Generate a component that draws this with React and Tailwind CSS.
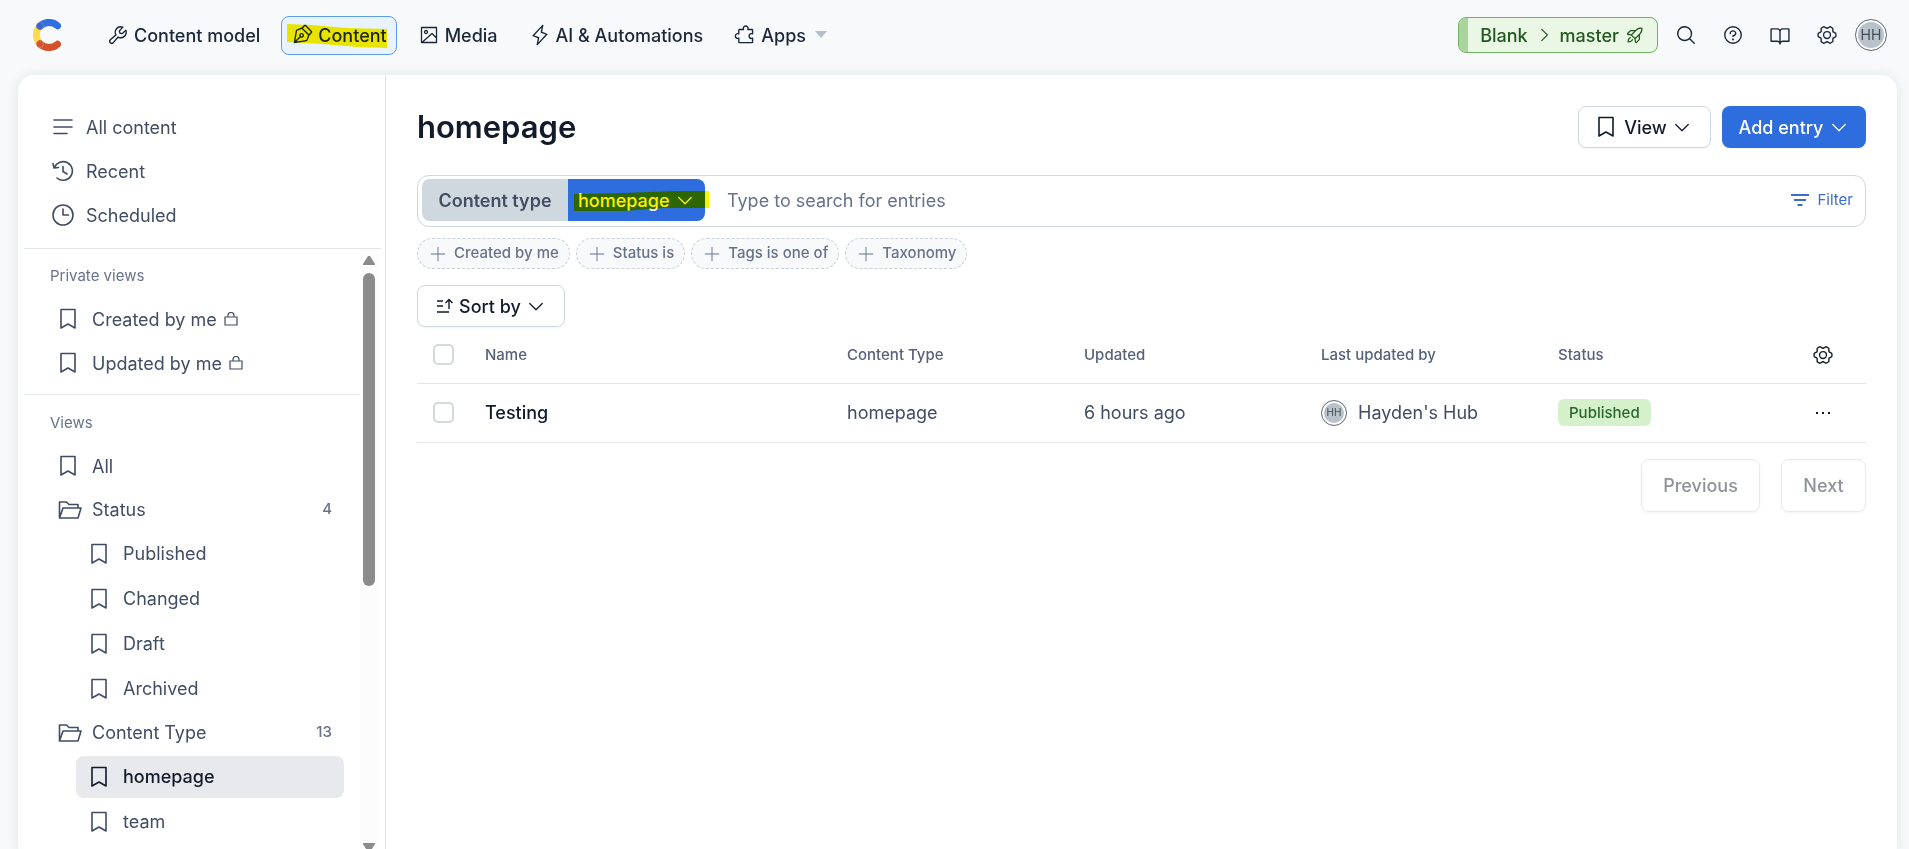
import React from 'react';
import {
  PiWrench,
  PiPenNib,
  PiLightning,
  PiPuzzlePiece,
  PiRocketLaunch,
  PiMagnifyingGlass,
  PiQuestion,
  PiBookOpen,
  PiGearSix,
  PiCaretDown,
  PiCaretRight,
  PiPlusLight,
} from 'react-icons/pi';

const Logo = () => (
  <svg className="h-8 w-7" viewBox="0 0 28 32" fill="none" strokeWidth="7">
    <path d="M7 7.2A12.5 12.5 0 0 0 7 24.800" stroke="#ffda4f" />
    <path d="M7 7.200A12.500 12.500 0 0 1 24.500 6.800" stroke="#2f6fde" strokeLinecap="round" />
    <path d="M7 24.800A12.500 12.500 0 0 0 24.500 25.200" stroke="#d2522b" strokeLinecap="round" />
    <circle cx="7" cy="7" r="3.500" fill="#3b63d0" stroke="#7fa0ea" strokeWidth="0.500" />
    <circle cx="7" cy="25" r="3.500" fill="#d2522b" stroke="#ee9a72" strokeWidth="0.500" />
  </svg>
);

const ImageIcon = ({ className }) => (
  <svg className={className} viewBox="0 0 22 22" fill="none" stroke="currentColor" strokeWidth="1.3" strokeLinejoin="round">
    <path d="M3.5 3.500h15v15h-15zM4.500 18 14 9.500l4.500 4.500" />
    <circle cx="8" cy="8" r="1.500" />
  </svg>
);

const BookmarkIcon = ({ className = '' }) => (
  <svg className={`h-[22px] w-[18px] shrink-0 ${className}`} viewBox="0 0 18 22" fill="none" stroke="currentColor" strokeWidth="1.6" strokeLinejoin="round">
    <path d="M2 1.500h14v18.500l-7-4-7 4z" />
  </svg>
);

const LinesIcon = () => (
  <svg className="h-[22px] w-[22px]" viewBox="0 0 22 22" fill="none" stroke="currentColor" strokeWidth="1.6" strokeLinecap="round">
    <path d="M2 4h18M2 11h18M2 17.500h13" />
  </svg>
);

const HistoryIcon = () => (
  <svg className="h-[22px] w-[22px]" viewBox="0 0 22 22" fill="none" stroke="currentColor" strokeWidth="1.6" strokeLinecap="round" strokeLinejoin="round">
    <path d="M2.500 7.500A9.300 9.300 0 1 1 5 18M1 3.500l1 4.500 4.500-.5M11 6.500v5l4 2.500" />
  </svg>
);

const ClockIcon = () => (
  <svg className="h-[22px] w-[22px]" viewBox="0 0 22 22" fill="none" stroke="currentColor" strokeWidth="1.6" strokeLinecap="round" strokeLinejoin="round">
    <circle cx="11" cy="11" r="10" />
    <path d="M11 5v6h5.500" />
  </svg>
);

const FolderIcon = () => (
  <svg className="h-5 w-6 shrink-0" viewBox="0 0 24 20" fill="none" stroke="currentColor" strokeWidth="1.6" strokeLinejoin="round">
    <path d="M1.500 18V2h7l2.500 2.500h9V8M1.500 18 5 8h18l-3 10z" />
  </svg>
);

const LockIcon = () => (
  <svg className="h-[14px] w-[14px]" viewBox="0 0 14 14" fill="none" stroke="currentColor" strokeWidth="1.2">
    <path d="M1 5h12v8H1zM4 5V3.500a3 3 0 0 1 6 0V5" />
  </svg>
);

const FilterIcon = () => (
  <svg className="h-[14px] w-5" viewBox="0 0 20 14" stroke="currentColor" strokeWidth="2">
    <path d="M1 2h18M4 7h12M7.500 12h5" />
  </svg>
);

const SortIcon = () => (
  <svg className="h-4 w-[18px]" viewBox="0 0 18 16" fill="none" stroke="currentColor" strokeWidth="1.400">
    <path d="M1 3h6M1 8h6M1 14h12M13 11V2M9.500 5 13 1.500 16.500 5" />
  </svg>
);

// Felt-tip stroke laid over a control
const Marker = ({ className, points, viewBox }) => (
  <svg aria-hidden="true" className={`pointer-events-none absolute mix-blend-multiply ${className}`} viewBox={viewBox} preserveAspectRatio="none">
    <polygon points={points} fill="#fff000" />
  </svg>
);

const Avatar = ({ className }) => (
  <span className={`flex shrink-0 items-center justify-center rounded-full border border-[#68737f] bg-[#b9c1c9] text-[#414d5b] ring-2 ring-white ring-inset ${className}`}>
    HH
  </span>
);

const navItems = [
  { label: 'Content model', icon: PiWrench },
  { label: 'Content', icon: PiPenNib, active: true },
  { label: 'Media', icon: ImageIcon },
  { label: 'AI & Automations', icon: PiLightning },
  { label: 'Apps', icon: PiPuzzlePiece, menu: true },
];

const tools = [
  { label: 'Search', icon: PiMagnifyingGlass },
  { label: 'Help', icon: PiQuestion },
  { label: 'Documentation', icon: PiBookOpen },
  { label: 'Settings', icon: PiGearSix },
];

const mainViews = [
  { label: 'All content', icon: LinesIcon },
  { label: 'Recent', icon: HistoryIcon },
  { label: 'Scheduled', icon: ClockIcon },
];

const folders = [
  { name: 'Status', count: 4, views: ['Published', 'Changed', 'Draft', 'Archived'] },
  { name: 'Content Type', count: 13, views: ['homepage', 'team'] },
];

const quickFilters = ['Created by me', 'Status is', 'Tags is one of', 'Taxonomy'];

const Header = () => (
  <header className="flex h-[75px] shrink-0 items-center pr-[22px] pb-[5px] pl-[33px]">
    <a href="#home" aria-label="Home">
      <Logo />
    </a>
    <nav className="ml-9 flex items-center gap-[11px]">
      {navItems.map(({ label, icon: Icon, active, menu }) => (
        <a
          key={label}
          href="#nav"
          className={`relative flex h-[39px] items-center gap-[5px] rounded-lg border px-[9px] text-[18px] font-medium text-[#1b273a] ${
            active ? 'border-[#5e9bea] bg-[#e8f3ff]' : 'border-transparent'
          }`}
        >
          <Icon className="h-[22px] w-[22px]" />
          <span>{label}</span>
          {menu && (
            <svg className="ml-1 h-2 w-3" viewBox="0 0 12 8" fill="#b6bec9">
              <path d="M0 0h12L6 7z" />
            </svg>
          )}
          {active && (
            <Marker className="top-[7px] right-2 left-[5px] h-6 w-[100px]" viewBox="0 0 100 24" points="0,0 25,1 60,4 100,5 100,24 70,23 35,20 0,18" />
          )}
        </a>
      ))}
    </nav>
    <div className="ml-auto flex items-center">
      <button className="flex h-9 items-center rounded-lg border border-[#6fb25f] bg-[#eaf7e5] pr-3 text-[18px] font-medium text-[#23571f]">
        <span className="mr-3 h-full w-[9px] rounded-l-[7px] bg-[#a9d49b]" />
        Blank
        <PiCaretRight className="mx-[7px] h-[18px] w-[18px]" />
        master
        <PiRocketLaunch className="ml-[6px] h-5 w-5" />
      </button>
      <div className="mx-[17px] flex gap-[25px] text-[#1b273a]">
        {tools.map(({ label, icon: Icon }) => (
          <button key={label} aria-label={label}>
            <Icon className="h-[22px] w-[22px]" />
          </button>
        ))}
      </div>
      <Avatar className="h-8 w-8 text-sm" />
    </div>
  </header>
);

const ViewLink = ({ label, locked, active, nested }) => (
  <li className={`flex items-center pr-4 ${nested ? 'h-[45px] pl-[52px]' : 'h-11 pl-[21px]'}`}>
    <a
      href="#view"
      className={`flex h-[42px] flex-1 items-center rounded-lg pl-[14px] ${
        active ? 'bg-[#e7e9ed] font-medium text-[#111b2b]' : ''
      }`}
    >
      <BookmarkIcon />
      <span className="ml-[15px] flex items-center gap-[7px]">
        {label}
        {locked && <LockIcon />}
      </span>
    </a>
  </li>
);

const Sidebar = () => (
  <aside className="flex w-[368px] shrink-0 flex-col border-r border-[#e2e6ea] pl-[6px] text-[18px] text-[#414d63]">
    <ul className="pt-[30px] pb-[11px] pl-7">
      {mainViews.map(({ label, icon: Icon }) => (
        <li key={label}>
          <a href="#view" className="flex h-11 items-center gap-3">
            <Icon />
            {label}
          </a>
        </li>
      ))}
    </ul>
    <div className="mr-1 flex min-h-0 flex-1 border-t border-[#e2e6ea] pr-[3px]">
      <div className="min-w-0 flex-1 overflow-hidden">
        <section className="border-b border-[#e2e6ea] pb-[9px]">
          <h2 className="px-[26px] pt-[15px] pb-[9px] text-[15px] leading-6 text-[#67728a]">Private views</h2>
          <ul>
            <ViewLink label="Created by me" locked />
            <ViewLink label="Updated by me" locked />
          </ul>
        </section>
        <section>
          <h2 className="px-[26px] pt-4 pb-[9px] text-[15px] leading-6 text-[#67728a]">Views</h2>
          <ul>
            <ViewLink label="All" />
            {folders.map((folder) => (
              <li key={folder.name}>
                <button className="flex h-[43px] w-full items-center pr-7 pl-[34px]">
                  <FolderIcon />
                  <span className="ml-[10px]">{folder.name}</span>
                  <span className="ml-auto text-[15px] font-medium text-[#67728a]">{folder.count}</span>
                </button>
                <ul>
                  {folder.views.map((view) => (
                    <ViewLink key={view} label={view} nested active={view === 'homepage'} />
                  ))}
                </ul>
              </li>
            ))}
          </ul>
        </section>
      </div>
      <div className="flex w-[18px] shrink-0 flex-col items-center bg-[#fcfcfc] pt-[6px] pb-2">
        <svg className="h-[10px] w-3" viewBox="0 0 12 10" fill="#8b8b8b">
          <path d="M5 1h2l5 8v1H0V9z" />
        </svg>
        <div className="mt-2 h-[313px] w-3 rounded-full bg-[#8b8b8b]" />
        <svg className="mt-auto h-[10px] w-3" viewBox="0 0 12 10" fill="#8b8b8b">
          <path d="M0 0h12v1L7 9H5L0 1z" />
        </svg>
      </div>
    </div>
  </aside>
);

const SearchBar = () => (
  <div className="mt-[27px] flex h-[52px] items-center rounded-xl border border-[#cfd6dd] pr-3 pb-[2px] pl-1">
    <span className="flex h-[42px] w-[146px] items-center justify-center rounded-l-lg bg-[#cfd8df] text-[18px] font-semibold text-[#414d63]">
      Content type
    </span>
    <button className="relative flex h-[42px] w-[137px] items-center rounded-r-lg bg-[#2e6ddd] pl-[10px] text-[18px] font-medium text-white">
      homepage
      <PiCaretDown className="ml-[5px] h-5 w-5" />
      <Marker className="top-3 -right-1 left-[6px] h-5 w-[135px]" viewBox="0 0 135 20" points="0,3 50,2 100,0 135,0 135,17 90,17 50,20 0,20" />
    </button>
    <input
      type="text"
      aria-label="Search entries"
      placeholder="Type to search for entries"
      className="ml-[22px] min-w-0 flex-1 text-[18px] outline-none placeholder:text-[#67728a]"
    />
    <button className="flex items-center gap-2 text-[15px] text-[#3d6bcb]">
      <FilterIcon />
      Filter
    </button>
  </div>
);

const RowCheckbox = ({ label }) => (
  <input
    type="checkbox"
    aria-label={label}
    className="block h-[21px] w-[21px] appearance-none rounded-[5px] border-2 border-[#d3d9de] bg-white"
  />
);

const EntriesTable = () => (
  <table className="w-full table-fixed text-left">
    <colgroup>
      <col className="w-[52px]" />
      <col />
      <col className="w-[237px]" />
      <col className="w-[237px]" />
      <col className="w-[237px]" />
      <col className="w-[237px]" />
      <col className="w-[87px]" />
    </colgroup>
    <thead>
      <tr className="h-14 border-b border-[#e2e6ea] text-[15px] text-[#56617a]">
        <th className="pl-4">
          <RowCheckbox label="Select all entries" />
        </th>
        <th className="pl-4 font-medium">Name</th>
        <th className="pl-4 font-medium">Content Type</th>
        <th className="pl-4 font-medium">Updated</th>
        <th className="pl-4 font-medium">Last updated by</th>
        <th className="pl-4 font-medium">Status</th>
        <th>
          <button aria-label="Table settings" className="mx-auto block text-[#111b2b]">
            <PiGearSix className="h-[22px] w-[22px]" />
          </button>
        </th>
      </tr>
    </thead>
    <tbody>
      <tr className="h-[59px] border-b border-[#e2e6ea] text-[18px] text-[#414d63]">
        <td className="pl-4">
          <RowCheckbox label="Select Testing" />
        </td>
        <td className="pl-4 font-medium text-[#111b2b]">Testing</td>
        <td className="pl-4">homepage</td>
        <td className="pl-4">6 hours ago</td>
        <td className="pl-4">
          <span className="flex items-center gap-[11px]">
            <Avatar className="h-[26px] w-[26px] text-[10px]" />
            Hayden's Hub
          </span>
        </td>
        <td className="pl-4">
          <span className="block w-fit rounded-md bg-[#d4f1cb] px-[11px] py-px text-[15px] leading-[25px] font-medium text-[#2a6630]">
            Published
          </span>
        </td>
        <td>
          <button aria-label="Entry actions" className="mx-auto flex gap-[4px] p-1">
            <span className="h-[2px] w-[2px] bg-[#111b2b]" />
            <span className="h-[2px] w-[2px] bg-[#111b2b]" />
            <span className="h-[2px] w-[2px] bg-[#111b2b]" />
          </button>
        </td>
      </tr>
    </tbody>
  </table>
);

const App = () => (
  <div className="flex h-screen flex-col overflow-hidden bg-[#f7f9fa] font-['Inter',sans-serif]">
    <Header />
    <div className="mr-3 -mb-3 ml-[18px] flex min-h-0 flex-1 rounded-2xl bg-white shadow-[0_0_14px_rgba(25,40,60,0.09)]">
      <Sidebar />
      <main className="min-w-0 flex-1 px-[31px] pt-[31px]">
        <div className="flex items-center">
          <h1 className="text-[31px] leading-[42px] font-semibold text-[#111b2b]">homepage</h1>
          <div className="ml-auto flex gap-[11px] text-[18px] font-medium">
            <button className="flex h-[42px] w-[133px] items-center justify-center rounded-lg border border-[#cfd6dd] text-[#111b2b] shadow-xs">
              <BookmarkIcon />
              <span className="mr-[5px] ml-[9px]">View</span>
              <PiCaretDown className="h-5 w-5" />
            </button>
            <button className="flex h-[42px] w-36 items-center justify-center gap-[6px] rounded-lg bg-[#2e6ddd] text-white shadow-xs">
              Add entry
              <PiCaretDown className="h-5 w-5" />
            </button>
          </div>
        </div>
        <SearchBar />
        <div className="mt-[11px] flex gap-[6px]">
          {quickFilters.map((label) => (
            <button
              key={label}
              className="flex h-[31px] items-center gap-[6px] rounded-full border border-dashed border-[#c9d1d9] bg-[#f7f9fa] px-[10px] text-[15px] font-medium text-[#67728a]"
            >
              <PiPlusLight className="h-5 w-5" />
              {label}
            </button>
          ))}
        </div>
        <button className="mt-4 flex h-[42px] w-[148px] items-center justify-center gap-[5px] rounded-lg border border-[#cfd6dd] text-[18px] font-medium text-[#111b2b] shadow-xs">
          <SortIcon />
          Sort by
          <PiCaretDown className="h-5 w-5" />
        </button>
        <EntriesTable />
        <div className="mt-4 flex justify-end gap-[21px] text-[18px] font-medium text-[#8f9399]">
          <button className="h-[53px] w-[119px] rounded-lg border border-[#e7e9ed] shadow-xs">Previous</button>
          <button className="h-[53px] w-[85px] rounded-lg border border-[#e7e9ed] shadow-xs">Next</button>
        </div>
      </main>
    </div>
  </div>
);

export default App;
